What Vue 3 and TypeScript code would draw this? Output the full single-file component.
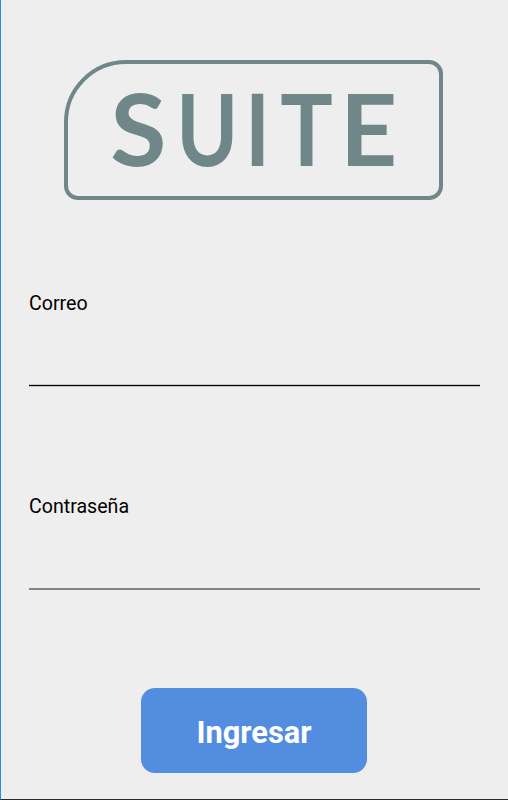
<script setup lang="ts">
import { ref } from 'vue'

interface Letter {
  char: string
  x: number
  stretch: number
}

const letters: Letter[] = [
  { char: 'S', x: 42.3, stretch: 1.03 },
  { char: 'U', x: 108.3, stretch: 0.84 },
  { char: 'I', x: 177, stretch: 0.85 },
  { char: 'T', x: 212.2, stretch: 0.88 },
  { char: 'E', x: 272, stretch: 1 },
]

const email = ref('')
const password = ref('')
</script>

<template>
  <main class="screen">
    <div class="logo">
      <svg class="wordmark" viewBox="0 0 371 131" role="img" aria-label="SUITE">
        <text
          v-for="letter in letters"
          :key="letter.char"
          class="letter"
          :transform="`translate(${letter.x} 101.7) scale(${letter.stretch} 1)`"
        >{{ letter.char }}</text>
      </svg>
    </div>
    <form class="form" @submit.prevent>
      <div class="field">
        <label class="label" for="email">Correo</label>
        <input id="email" v-model="email" class="input active" type="email" />
      </div>
      <div class="field">
        <label class="label" for="password">Contraseña</label>
        <input id="password" v-model="password" class="input" type="password" />
      </div>
      <button class="submit" type="submit">Ingresar</button>
    </form>
  </main>
</template>

<style>
body {
  background: #eee;
}
</style>

<style scoped>
.screen {
  box-sizing: border-box;
  height: 800px;
  padding: 60px 28px 0;
  border-left: 1px solid #2b8be0;
  border-bottom: 1px solid #2b2b2b;
  background: #eee;
  font-family: Roboto, sans-serif;
  color: #000;
}

.logo {
  box-sizing: border-box;
  width: 379px;
  height: 140px;
  margin: 0 35px;
  border: 4px solid #6f8789;
  border-radius: 62px 14px 14px 14px;
}

.wordmark {
  display: block;
  width: 371px;
  height: 131px;
}

.letter {
  font-family: Lato, sans-serif;
  font-size: 99.5px;
  font-weight: 700;
  fill: #6f8789;
}

.form {
  display: flex;
  flex-direction: column;
  align-items: center;
  padding-top: 91px;
}

.field {
  display: flex;
  flex-direction: column;
  width: 451px;
  height: 203px;
}

.label {
  box-sizing: border-box;
  height: 24px;
  padding-top: 1px;
  font-size: 19.6px;
  line-height: 24px;
}

.input {
  box-sizing: border-box;
  height: 72px;
  padding: 20px 0 8px;
  border: 0;
  border-bottom: 2px solid #848484;
  border-radius: 0;
  outline: 0;
  background: transparent;
  font: inherit;
  font-size: 20px;
}

.input.active {
  height: 71px;
  border-bottom: 1px solid #000;
  box-shadow: 0 1px 0 #c5c9c5, inset 0 -1px 0 #c5c9c5;
}

.submit {
  width: 226px;
  height: 85px;
  margin: -9px 1px 0 0;
  padding: 4px 0 0;
  border: 0;
  border-radius: 14px;
  background: #528ddf;
  color: #fff;
  font-family: inherit;
  font-size: 30.8px;
  font-weight: 700;
}
</style>
